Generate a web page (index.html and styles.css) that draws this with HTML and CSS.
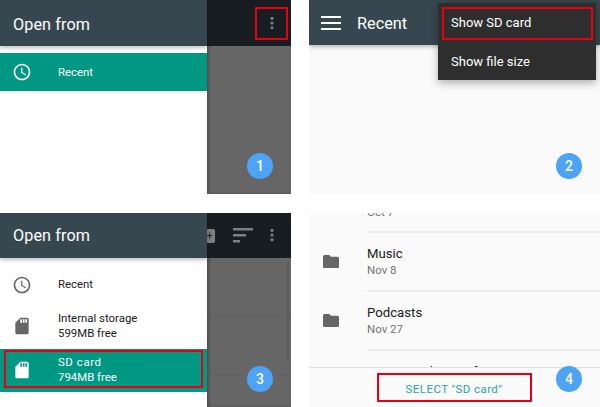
FILE: index.html
```html
<!DOCTYPE html>
<html lang="en">
<head>
<meta charset="utf-8">
<title>Open from SD card</title>
<link rel="stylesheet" href="styles.css">
</head>
<body>
<main class="grid">

  <section class="panel split">
    <div class="drawer">
      <header class="bar drawer-bar"><h1>Open from</h1></header>
      <nav class="nav nav-first">
        <div class="row row-recent active">
          <svg class="nav-icon" viewBox="0 0 24 24"><path d="M11.99 2C6.47 2 2 6.48 2 12s4.47 10 9.99 10C17.52 22 22 17.52 22 12S17.52 2 11.99 2zM12 20c-4.42 0-8-3.58-8-8s3.58-8 8-8 8 3.58 8 8-3.58 8-8 8zm.5-13H11v6l5.25 3.15.75-1.23-4.5-2.67z"/></svg>
          <span class="row-text">Recent</span>
        </div>
      </nav>
    </div>
    <div class="scrim">
      <div class="scrim-bar">
        <svg class="dots" viewBox="0 0 4 16"><circle cx="2" cy="2.5" r="1.7"/><circle cx="2" cy="7.5" r="1.7"/><circle cx="2" cy="12.5" r="1.7"/></svg>
      </div>
    </div>
    <div class="mark mark-dots"></div>
    <div class="badge">1</div>
  </section>

  <section class="panel plain">
    <header class="bar recent-bar">
      <svg class="burger" viewBox="0 0 20 14"><path d="M0 0h20v2H0zM0 6h20v2H0zM0 12h20v2H0z"/></svg>
      <h2>Recent</h2>
    </header>
    <div class="menu">
      <div class="menu-item">Show SD card</div>
      <div class="menu-item">Show file size</div>
    </div>
    <div class="mark mark-menu"></div>
    <div class="badge">2</div>
  </section>

  <section class="panel split">
    <div class="drawer">
      <header class="bar drawer-bar drawer-bar-short"><h1>Open from</h1></header>
      <nav class="nav">
        <div class="row row-recent2">
          <svg class="nav-icon" viewBox="0 0 24 24"><path d="M11.99 2C6.47 2 2 6.48 2 12s4.47 10 9.99 10C17.52 22 22 17.52 22 12S17.52 2 11.99 2zM12 20c-4.42 0-8-3.58-8-8s3.58-8 8-8 8 3.58 8 8-3.58 8-8 8zm.5-13H11v6l5.25 3.15.75-1.23-4.5-2.67z"/></svg>
          <span class="row-text">Recent</span>
        </div>
        <div class="row row-storage">
          <svg class="nav-icon" viewBox="0 0 24 24"><path d="M18 2h-8L4 8v12c0 1.1.9 2 2 2h12c1.1 0 2-.9 2-2V4c0-1.1-.9-2-2-2zm-6 6h-2V4h2v4zm3 0h-2V4h2v4zm3 0h-2V4h2v4z"/></svg>
          <span class="row-text">Internal storage<br>599MB free</span>
        </div>
        <div class="row row-sd active">
          <svg class="nav-icon" viewBox="0 0 24 24"><path d="M18 2h-8L4 8v12c0 1.1.9 2 2 2h12c1.1 0 2-.9 2-2V4c0-1.1-.9-2-2-2zm-6 6h-2V4h2v4zm3 0h-2V4h2v4zm3 0h-2V4h2v4z"/></svg>
          <span class="row-text"><span class="spaced">SD card</span><br>794MB free</span>
        </div>
      </nav>
    </div>
    <div class="scrim">
      <div class="scrim-bar scrim-bar-icons">
        <div class="chip">+</div>
        <svg class="sort" viewBox="0 0 20 15"><path d="M0 0h20v2.4H0zM0 6h13v2.4H0zM0 12h7v2.4H0z"/></svg>
        <svg class="dots" viewBox="0 0 4 16"><circle cx="2" cy="2.5" r="1.7"/><circle cx="2" cy="7.5" r="1.7"/><circle cx="2" cy="12.5" r="1.7"/></svg>
      </div>
      <div class="scrim-list">
        <div class="scrim-line"></div>
        <div class="scrim-line"></div>
        <div class="scrollbar"></div>
      </div>
    </div>
    <div class="mark mark-sd"></div>
    <div class="badge">3</div>
  </section>

  <section class="panel plain list-panel">
    <div class="files">
      <div class="file file-clipped"><span class="file-date">Oct 7</span></div>
      <div class="file">
        <svg class="folder" viewBox="2 4 20 16" preserveAspectRatio="none"><path d="M10 4H4c-1.1 0-2 .9-2 2v12c0 1.1.9 2 2 2h16c1.1 0 2-.9 2-2V8c0-1.1-.9-2-2-2h-8l-2-2z"/></svg>
        <div class="file-text"><div class="file-name">Music</div><div class="file-date">Nov 8</div></div>
      </div>
      <div class="file">
        <svg class="folder" viewBox="2 4 20 16" preserveAspectRatio="none"><path d="M10 4H4c-1.1 0-2 .9-2 2v12c0 1.1.9 2 2 2h16c1.1 0 2-.9 2-2V8c0-1.1-.9-2-2-2h-8l-2-2z"/></svg>
        <div class="file-text"><div class="file-name">Podcasts</div><div class="file-date">Nov 27</div></div>
      </div>
      <div class="file file-last"><div class="file-name">System Volume Information</div></div>
    </div>
    <footer class="select-bar"><span class="select-btn">SELECT "SD card"</span></footer>
    <div class="mark mark-select"></div>
    <div class="badge">4</div>
  </section>

</main>
</body>
</html>
```

FILE: styles.css
```css
* { box-sizing: border-box; }

html, body { margin: 0; padding: 0; background: #fff; }

body {
  width: 600px;
  height: 407px;
  overflow: hidden;
  font-family: Roboto, "Liberation Sans", sans-serif;
}

h1, h2 { margin: 0; font-weight: 400; }

.grid {
  display: grid;
  grid-template-columns: 291px 291px;
  grid-template-rows: 194px 194px;
  column-gap: 18px;
  row-gap: 19px;
}

.panel { position: relative; overflow: hidden; }
.split { display: flex; }
.plain { background: #fafafa; }

.bar {
  display: flex;
  align-items: center;
  height: 46px;
  background: #37474f;
  color: #fff;
  box-shadow: 0 2px 4px rgba(0, 0, 0, .25);
}

/* drawer */
.drawer { position: relative; z-index: 1; width: 207px; background: #fff; display: flex; flex-direction: column; }
.drawer-bar { flex: none; padding: 2px 0 0 13px; }
.drawer-bar-short { height: 45px; padding-top: 0; }
.drawer-bar h1 { font-size: 16.2px; letter-spacing: .1px; }

.nav { flex: 1; }
.nav-first { padding-top: 7px; }

.row { display: flex; align-items: center; color: #212121; font-size: 11.4px; line-height: 15px; }
.row .nav-icon { flex: none; width: 20px; height: 20px; margin-left: 12px; fill: #666; }
.row .row-text { margin-left: 26px; }
.active { background: #009882; color: #fff; }
.row.active .nav-icon { fill: #fff; }
.spaced { letter-spacing: .6px; }

.row-recent { height: 38px; }
.row-recent2 { height: 43px; margin-top: 5px; }
.row-storage { height: 43px; padding-bottom: 4px; }
.row-sd { height: 43px; padding-bottom: 2px; }

/* scrim */
.scrim { flex: 1; background: #666; display: flex; flex-direction: column; box-shadow: inset 2px 0 3px rgba(0, 0, 0, .25); }
.scrim-bar { flex: none; height: 46px; background: #171d20; display: flex; align-items: center; justify-content: flex-end; padding-right: 17px; }
.scrim-bar-icons { height: 45px; gap: 17px; position: relative; }
.dots { width: 4px; height: 15px; fill: #7f7f7f; }
.sort { width: 20px; height: 15px; fill: #7f7f7f; }
.chip {
  position: absolute;
  left: -3px;
  top: 16px;
  width: 11px;
  height: 14px;
  border-radius: 0 2px 2px 0;
  background: #7f7f7f;
  color: #171d20;
  font-size: 11px;
  line-height: 14px;
  text-align: center;
}
.scrim-list { position: relative; flex: 1; }
.scrim-line { height: 1px; background: #5f5f5f; margin-top: 58px; }
.scrollbar { position: absolute; right: 2px; top: 3px; width: 2px; height: 100px; background: #5c5c5c; }

/* recent bar + menu */
.recent-bar { height: 45px; padding-left: 12px; }
.burger { width: 20px; height: 14px; fill: #fff; }
.recent-bar h2 { margin: 2px 0 0 16px; font-size: 16.3px; }

.menu {
  position: absolute;
  left: 129px;
  top: 3px;
  width: 158px;
  height: 77px;
  background: #2e2e2e;
  box-shadow: 0 3px 8px rgba(0, 0, 0, .3);
  color: #fff;
  font-size: 13px;
}
.menu-item { height: 39px; padding: 12px 0 0 13px; line-height: 16px; }

/* file list */
.list-panel { display: flex; flex-direction: column; }
.files { height: 154px; overflow: hidden; }
.file { display: flex; align-items: center; height: 59px; margin-left: 58px; position: relative; border-top: 2px solid #ececec; }
.file-clipped { height: 18px; border-top: 0; align-items: flex-start; overflow: hidden; }
.file-clipped .file-date { margin-top: -8px; }
.file-last { height: 30px; align-items: flex-start; padding-top: 13px; }
.file-text { padding-top: 1px; }
.folder { position: absolute; left: -44px; top: 22px; width: 16px; height: 13px; fill: #666; }
.file-name { font-size: 13.2px; line-height: 16px; color: #212121; }
.file-date { font-size: 11.5px; line-height: 15px; color: #757575; margin-top: 1px; }
.select-bar { flex: 1; display: flex; justify-content: center; align-items: center; border-top: 1px solid #e0e0e0; padding: 2px 1px 0 0; background: #fafafa; }
.select-btn { color: #26a69a; font-size: 11.5px; letter-spacing: .42px; }

/* annotation marks */
.mark { position: absolute; z-index: 2; border: 2px solid #e60012; }
.mark-dots { left: 255px; top: 7px; width: 33px; height: 33px; }
.mark-menu { left: 133px; top: 7px; width: 151px; height: 33px; }
.mark-sd { left: 4px; top: 137px; width: 199px; height: 38px; }
.mark-select { left: 68px; top: 160px; width: 155px; height: 29px; }

.badge {
  position: absolute;
  z-index: 3;
  left: 247px;
  top: 153px;
  width: 26px;
  height: 26px;
  border-radius: 50%;
  background: #4da3f5;
  color: #fff;
  font-size: 14px;
  font-weight: 500;
  line-height: 26px;
  text-align: center;
}
```
